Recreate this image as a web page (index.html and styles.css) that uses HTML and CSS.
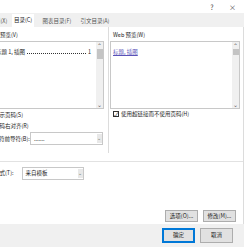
FILE: index.html
```html
<!DOCTYPE html>
<html lang="zh-CN">
<head>
  <meta charset="UTF-8">
  <title>目录</title>
  <link rel="stylesheet" href="styles.css">
</head>
<body>
<div class="dialog">
  <div class="titlebar">
    <span class="tb-btn">?</span>
    <span class="tb-btn">×</span>
  </div>
  <div class="tabs">
    <span class="tab">索引(X)</span>
    <span class="tab active">目录(C)</span>
    <span class="tab">图表目录(F)</span>
    <span class="tab">引文目录(A)</span>
  </div>
  <div class="panel">
    <div class="previews">
      <div class="group left">
        <div class="label">打印预览(V)</div>
        <div class="preview">
          <div class="preview-body">
            <div class="toc-line"><span>标题 1, 插图</span><span class="dots"></span><span>1</span></div>
          </div>
          <div class="scroll"><span class="arr">⌃</span><span class="thumb tall"></span><span class="fill"></span><span class="arr">⌄</span></div>
        </div>
        <div class="row"><span class="cb on"></span>显示页码(S)</div>
        <div class="row"><span class="cb on"></span>页码右对齐(R)</div>
        <div class="row sel-row lead-row">制表符前导符(B):<span class="select lead"><span class="val">.......</span><span class="drop">⌄</span></span></div>
      </div>
      <div class="group right">
        <div class="label">Web 预览(W)</div>
        <div class="preview">
          <div class="preview-body">
            <a class="link">标题, 插图</a>
          </div>
          <div class="scroll"><span class="arr">⌃</span><span class="thumb"></span><span class="fill"></span><span class="arr">⌄</span></div>
        </div>
        <div class="row web"><span class="cb on">✓</span>使用超链接而不使用页码(H)</div>
      </div>
    </div>
    <div class="general">
      <div class="row sel-row">格式(T):<span class="select fmt"><span class="val">来自模板</span><span class="drop">⌄</span></span></div>
    </div>
    <div class="actions">
      <span class="btn">选项(O)...</span>
      <span class="btn">修改(M)...</span>
    </div>
  </div>
  <div class="footer">
    <span class="btn default">确定</span>
    <span class="btn">取消</span>
  </div>
</div>
</body>
</html>
```

FILE: styles.css
```css
body { margin: 0; background: #fff; font-family: "Noto Sans CJK SC", "Noto Sans", sans-serif; font-size: 5.5px; color: #222; overflow: hidden; }
.dialog { margin-left: -22px; width: 266px; height: 247px; display: flex; flex-direction: column; }

.titlebar { height: 13px; display: flex; justify-content: flex-end; align-items: center; gap: 14px; padding-right: 9px; font-size: 7px; color: #444; }
.tb-btn { width: 6px; text-align: center; }

.tabs { height: 14px; background: #f0f0f0; display: flex; align-items: flex-end; padding-left: 7px; color: #555; }
.tab { height: 11px; line-height: 11px; padding: 0 4.5px; white-space: nowrap; }
.tab.active { background: #fff; height: 13px; line-height: 12px; padding: 0 2px; margin-right: 4px; color: #222; }

.panel { height: 197px; border-right: 1px solid #dcdcdc; display: flex; flex-direction: column; }
.previews { display: grid; grid-template-columns: 130px 1fr; height: 126px; }
.group { padding-top: 3px; }
.group.right { border-left: 1px solid #dcdcdc; padding-left: 1px; padding-right: 3px; }
.label { height: 10px; line-height: 10px; padding-left: 11px; }
.group.right .label { padding-left: 3px; }

.preview { height: 66px; margin-top: 1px; border: 1px solid #c8c8c8; display: flex; }
.group.left .preview { margin-left: 4px; margin-right: 4px; }
.preview-body { flex: 1; padding: 6px 3px 0 6px; }
.group.right .preview-body { padding-left: 2px; }
.toc-line { display: flex; align-items: baseline; padding-left: 7px; padding-right: 2px; }
.dots { flex: 1; border-bottom: 1px dotted #333; margin: 0 2px; height: 3px; }
.link { color: #5a52b8; text-decoration: underline; }

.scroll { width: 7px; background: #f0f0f0; display: flex; flex-direction: column; align-items: center; }
.arr { height: 7px; line-height: 8px; font-size: 6px; color: #606060; }
.thumb { width: 6px; height: 6px; background: #c4c4c4; }
.thumb.tall { height: 10px; }
.fill { flex: 1; }

.row { display: flex; align-items: center; height: 11px; padding-left: 16px; white-space: nowrap; }
.group.left .row:first-of-type { margin-top: 1px; }
.cb { width: 6px; height: 6px; border: 1px solid #333; box-sizing: border-box; font-size: 6px; line-height: 5px; text-align: center; margin-left: -10px; margin-right: 4px; flex-shrink: 0; }
.row.web { padding-left: 3px; height: 10px; }
.row.web .cb { margin-left: 0; margin-right: 2px; }

.sel-row { height: 13px; margin-top: 1px; }
.lead-row { padding-left: 10px; }
.select { display: flex; align-items: center; height: 11px; border: 1px solid #c8c8c8; flex-shrink: 0; }
.select .val { flex: 1; padding-left: 3px; }
.drop { width: 5px; height: 9px; line-height: 8px; background: #e8e8e8; text-align: center; font-size: 5px; color: #666; }
.select.lead { width: 71px; margin-left: auto; margin-right: 7px; }

.general { border-top: 1px solid #e2e2e2; margin-top: 8px; padding-top: 5px; }
.general .sel-row { margin-top: 0; height: 12px; }
.select.fmt { width: 60px; margin-left: 8px; }

.actions { margin-top: auto; display: flex; justify-content: flex-end; gap: 5px; padding: 0 7px 2px 0; }
.btn { width: 33px; height: 12px; line-height: 11px; box-sizing: border-box; text-align: center; background: #e1e1e1; border: 1px solid #adadad; }

.footer { flex: 1; background: #f0f0f0; display: flex; justify-content: flex-end; align-items: center; gap: 5px; padding-right: 11px; }
.footer .btn { height: 15px; line-height: 13px; }
.btn.default { border: 1px solid #0078d7; box-shadow: inset 0 0 0 1px #0078d7; }
```
